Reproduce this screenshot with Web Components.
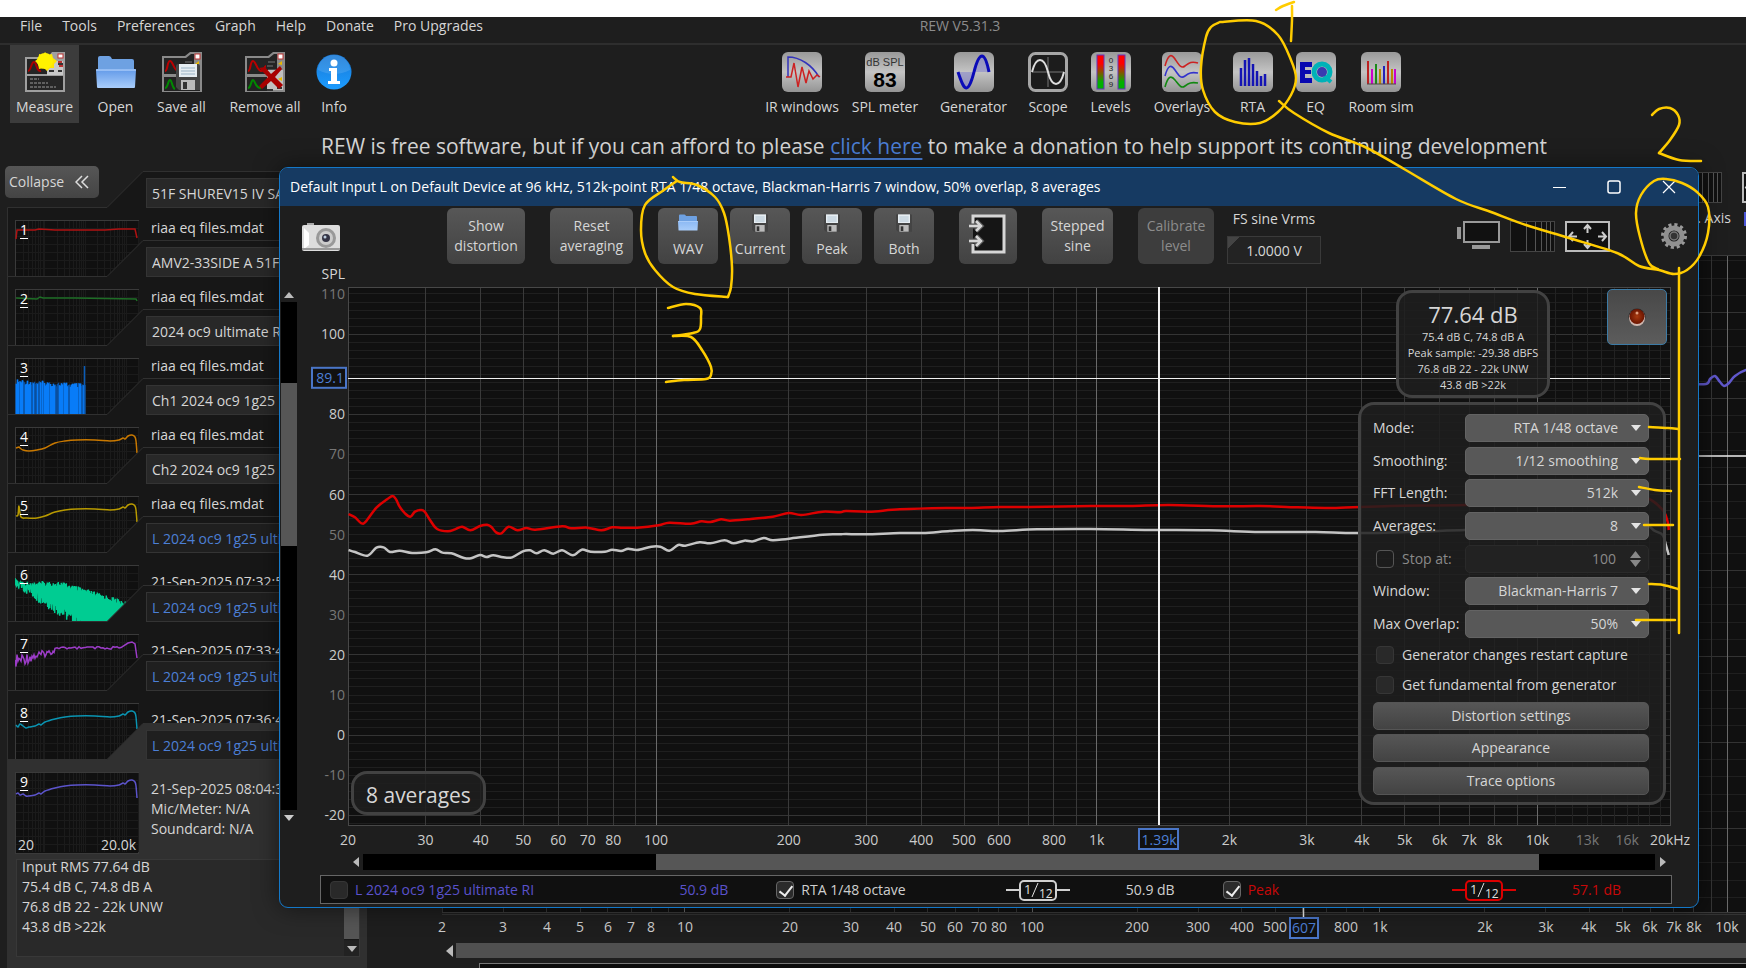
<!DOCTYPE html>
<html lang="en">
<head>
<meta charset="utf-8">
<title>REW V5.31.3</title>
<style>
  html, body { height: 100%; margin: 0; background: #fff; }
  body { overflow: hidden; font: 14px/20px "Open Sans", "Noto Sans", sans-serif; color: #d6d6d6; }
</style>
</head>
<body>
<rew-app></rew-app>

<script>
const CONTROL_CSS = `
  * { box-sizing: border-box; }
  button, input, select { font: inherit; color: inherit; margin: 0; }
  input[type=checkbox] {
    appearance: none;
    flex: none;
    width: 18px;
    height: 18px;
    border: 1px solid #363636;
    border-radius: 4px;
    background: #292929;
  }
`;

const tile = (id, inner) => `
  <svg width="40" height="40" viewBox="0 0 40 40">
    <defs><linearGradient id="t-${id}" x2="0" y2="1">
      <stop offset="0" stop-color="#999"/><stop offset=".5" stop-color="#c4c4c4"/><stop offset="1" stop-color="#949494"/>
    </linearGradient></defs>
    <rect width="40" height="40" rx="6" fill="url(#t-${id})"/>${inner}
  </svg>`;

const miniApp = `
  <path d="M0 4h23l5-4h12v40H0z" fill="#8a8a8a"/>
  <path d="M2 6h22l5-4h3v20H2z" fill="#242424"/>
  <path d="M3 19C6 19 5 9 8 9s4 10 8 10 3-5 5-5" fill="none" stroke="#b00" stroke-width="2"/>
  <rect x="33" y="2" width="5" height="5" fill="#fff" stroke="#b33" stroke-width="1"/>
  <path d="M33 12l4-3v4z" fill="#e8b800"/>
  <path d="M23 10h7M22 14h6M23 18h8" stroke="#777"/>`;

const folder = `
  <path d="M2 3q0-2 2-2h9q2 0 3 3h20q2 0 2 2v12H2z" fill="#6ea1e2"/>
  <path d="M0 15q0-1 1-1h38q1 0 1 1l-1 17q0 1-1 1H2q-1 0-1-1z" fill="url(#fo)"/>
  <path d="M0 15h40" stroke="#c7dfff"/>`;

const floppy = `
  <path d="M0 2q0-2 2-2h20q2 0 2 2v24H3l-3-3z" fill="#444"/>
  <rect x="3" y="0" width="18" height="13" fill="#e6edf2"/>
  <path d="M5 4h14M5 7h14M5 10h14" stroke="#9bb3c5"/>
  <rect x="5" y="16" width="14" height="10" fill="#bbb"/>
  <rect x="7" y="18" width="4" height="7" fill="#333"/>`;

const ICONS = {
  measure: `<svg width="40" height="40" viewBox="0 0 40 40">
    <path d="M0 5h23l4-5h13v40H0z" fill="#a0a0a0"/>
    <rect x="2" y="7" width="20" height="15" fill="#242424"/>
    <path d="M3 19c3 0 3-9 6-9s2 10 7 9" fill="none" stroke="#a00" stroke-width="2"/>
    <rect x="22" y="9" width="16" height="14" fill="#c9c9c9"/>
    <rect x="33" y="2" width="5" height="4" fill="#fff" stroke="#b33"/><path d="M33 10h4M34 14h4" stroke="#b33" stroke-width="2"/>
    <path d="M33 12h5M24 19h5M33 19h4" stroke="#333" stroke-width="2"/>
    <rect x="2" y="24" width="36" height="14" fill="#262626"/>
    <path d="M5 27h9M5 31h18M5 35h26" stroke="#999" stroke-dasharray="3 1"/>
    <path d="M20 0l3 3 4-1 1 4 4 3-3 3 0 4-4 0-3 3-3-3-5 1-1-5-3-3 4-3 0-4 4 1z" fill="#ffe600"/>
    <circle cx="20" cy="9" r="8" fill="#fff100"/></svg>`,
  open: `<svg width="40" height="34" viewBox="0 0 40 34"><defs><linearGradient id="fo" x2="0" y2="1">
    <stop offset="0" stop-color="#6199e8"/><stop offset="1" stop-color="#a9cdfa"/></linearGradient></defs>${folder}</svg>`,
  save: `<svg width="40" height="40" viewBox="0 0 40 40">${miniApp}
    <rect x="2" y="25" width="36" height="14" fill="#222"/><path d="M3 36c3 0 3-8 5-8s2 8 5 9" fill="none" stroke="#080" stroke-width="2"/>
    <g transform="translate(14 12)">${floppy}</g></svg>`,
  remove: `<svg width="40" height="40" viewBox="0 0 40 40">${miniApp}
    <rect x="2" y="25" width="20" height="14" fill="#222"/><path d="M3 36c3 0 3-8 5-8s2 8 8 8" fill="none" stroke="#080" stroke-width="2"/>
    <rect x="22" y="18" width="16" height="20" fill="#c0c0c0"/><path d="M33 27l4-2v4z" fill="#e8b800"/><path d="M22 38h6M32 36h5" stroke="#333" stroke-width="2"/>
    <path d="M14 16l6-1 6 7 9-8 2 3-7 8 8 8-4 4-8-8-9 8-3-3 9-9z" fill="#a80000"/></svg>`,
  info: `<svg width="36" height="36" viewBox="0 0 36 36"><defs><linearGradient id="in" x2="0" y2="1">
    <stop offset="0" stop-color="#1878d6"/><stop offset="1" stop-color="#1c9cff"/></linearGradient></defs>
    <circle cx="18" cy="18" r="17.5" fill="url(#in)"/><path d="M2 16a16 15 0 0 1 32 0q-16 8-32 0z" fill="#fff" opacity=".12"/>
    <circle cx="18" cy="9" r="3.5" fill="#fff"/><path d="M13 14h8v13h3v3H12v-3h3V17h-2z" fill="#fff"/></svg>`,
  ir: tile('ir', `<path d="M6 25V5c12 0 24 8 31 20" fill="none" stroke="#33b" stroke-width="1.5"/>
    <path d="M4 25h5l3-14 4 24 4-20 4 16 3-12 4 8 4-4 3 2" fill="none" stroke="#c22" stroke-width="1.5"/>`),
  spl: tile('spl', `<text x="20" y="14" text-anchor="middle" font-family="Liberation Sans" font-size="11" fill="#333">dB SPL</text>
    <text x="20" y="35" text-anchor="middle" font-family="Liberation Sans" font-weight="bold" font-size="21" fill="#000">83</text>`),
  generator: tile('ge', `<path d="M5 20h30C33 9 30 4 28 4S23 9 20 20 14 36 12 36 7 28 5 20z" fill="#88c" opacity=".6"/>
    <path d="M4 20C8 32 10 36 12.500 36S18 28 20 20 25 4 28 4s5 6 7 16" fill="none" stroke="#0b0bb8" stroke-width="3"/>`),
  scope: `<svg width="40" height="40" viewBox="0 0 40 40"><rect x="1.500" y="1.500" width="37" height="37" rx="6" fill="#1c1c1c" stroke="#a6a6a6" stroke-width="3"/>
    <path d="M20 5v30M4 20h32" stroke="#777"/><path d="M4 20C8 4 16 4 20 20s12 16 16 0" fill="none" stroke="#ddd" stroke-width="2"/></svg>`,
  levels: tile('le', `<defs><linearGradient id="lv" x2="0" y2="1"><stop offset=".25" stop-color="#f00"/><stop offset=".8" stop-color="#00b000"/></linearGradient></defs>
    <rect x="6" y="3" width="7" height="34" fill="url(#lv)" stroke="#63b"/><rect x="27" y="3" width="7" height="34" fill="url(#lv)" stroke="#63b"/>
    <g font-family="Liberation Sans" font-size="8" fill="#222" text-anchor="middle"><text x="20" y="11">0</text><text x="20" y="19">3</text><text x="20" y="27">6</text><text x="20" y="35">9</text></g>`),
  overlays: tile('ov', `<g fill="none" stroke-width="1.600"><path d="M3 14C6 3 9 1 13 7s6 10 10 7 6-5 13-3" stroke="#c22"/>
    <path d="M3 24c3-11 6-12 10-6s6 9 10 6 6-4 13-3" stroke="#33c"/><path d="M3 35c3-11 6-12 10-7s6 9 10 6 6-4 13-3" stroke="#181"/></g>`),
  rta: tile('rt', `<path d="M8 34V16M12 34V8M16 34V6M20 34V12M24 34V19M28 34V24M32 34V22" stroke="#1414b4" stroke-width="2.500"/>`),
  eq: tile('eq', `<circle cx="26" cy="20" r="8" fill="none" stroke="#00b2b8" stroke-width="5"/><path d="M28 24l7 6" stroke="#00b2b8" stroke-width="4"/><circle cx="26" cy="20" r="5" fill="#3a3ab0"/>
    <path d="M4 10h12v5h-7v3h6v4h-6v4h7v5H4z" fill="#0808b0"/>`),
  room: tile('ro', `<path d="M7 32V9" stroke="#b22" stroke-width="2"/><path d="M11 32V17" stroke="#c0c" stroke-width="2"/><path d="M15 32V12" stroke="#1a8a1a" stroke-width="2"/><path d="M19 32V17" stroke="#b80" stroke-width="2"/>
    <path d="M23 32V14" stroke="#22b" stroke-width="2"/><path d="M27 32V9" stroke="#b22" stroke-width="2"/><path d="M31 32V17" stroke="#b80" stroke-width="2"/><path d="M34 32V17" stroke="#c0c" stroke-width="2"/><path d="M6 32h29" stroke="#544"/>`),
  folder: `<svg width="20" height="17" viewBox="0 0 40 34"><defs><linearGradient id="fo" x2="0" y2="1">
    <stop offset="0" stop-color="#8bb8f3"/><stop offset="1" stop-color="#a9cdfa"/></linearGradient></defs>${folder}</svg>`,
  floppy: `<svg width="16" height="18" viewBox="0 0 24 26">${floppy}</svg>`,
  camera: `<svg width="38" height="29" viewBox="0 0 38 29"><rect x="5" y="1" width="7" height="4" fill="#aaa"/><rect y="3" width="38" height="26" rx="2" fill="#ddd"/>
    <path d="M2 6l5 5v12l-5 4z" fill="#fff"/><path d="M0 27h38" stroke="#999" stroke-width="2"/><circle cx="24" cy="16" r="10" fill="#999"/><circle cx="24" cy="16" r="7" fill="#ccc"/>
    <circle cx="24" cy="16" r="4" fill="#334"/><circle cx="23" cy="15" r="1.500" fill="#bcd"/></svg>`,
  input: `<svg width="38" height="40" viewBox="0 0 38 40"><path d="M4 14V2h31v36H4v-8" fill="#151515" stroke="#d6d6d6" stroke-width="3"/>
    <path d="M0 12h11M7 7l5 5-5 5M0 27h11M7 22l5 5-5 5" fill="none" stroke="#555" stroke-width="5"/>
    <path d="M0 12h11M7 7l5 5-5 5M0 27h11M7 22l5 5-5 5" fill="none" stroke="#d6d6d6" stroke-width="2.500"/></svg>`,
  monitor: `<svg width="43" height="30" viewBox="0 0 43 30"><rect y="6" width="4" height="12" fill="#999"/><rect x="7" y="1" width="35" height="20" fill="#111" stroke="#999" stroke-width="2"/>
    <rect x="15" y="24" width="18" height="4" fill="#999"/></svg>`,
  grid: `<svg width="45" height="31" viewBox="0 0 45 31"><rect x=".5" y=".5" width="44" height="30" fill="#111" stroke="#444"/>
    <path d="M16.500 1v29M25.500 1v29M31.500 1v29M36.500 1v29M40.500 1v29" stroke="#555"/></svg>`,
  arrows: `<svg width="45" height="31" viewBox="0 0 45 31"><rect x="1" y="1" width="43" height="29" fill="#111" stroke="#bbb" stroke-width="2"/>
    <path d="M22.500 12V4M19 8l3.500-4L26 8M22.500 19v8M19 23l3.500 4 3.500-4M12 15.500H4M8 11l-4 4.500L8 20M33 15.500h8M37 11l4 4.500-4 4.500" fill="none" stroke="#ccc" stroke-width="2"/></svg>`,
  gear: `<svg width="28" height="28" viewBox="-14 -14 28 28"><circle r="11" fill="none" stroke="#999" stroke-width="4" stroke-dasharray="3 2.760"/>
    <circle r="8" fill="none" stroke="#909090" stroke-width="5"/><circle r="4" fill="#333" stroke="#777" stroke-width="1.500"/></svg>`
};

// Catmull-Rom spline through a flat "x,y x,y" list
function smooth(list) {
  const p = list.trim().split(/\s+/).map(s => s.split(',').map(Number));
  let d = `M${p[0]}`;
  for (let i = 0; i < p.length - 1; i++) {
    const a = p[i - 1] || p[i], b = p[i], c = p[i + 1], e = p[i + 2] || c;
    d += `C${b[0] + (c[0] - a[0]) / 6},${b[1] + (c[1] - a[1]) / 6} ${c[0] - (e[0] - b[0]) / 6},${c[1] - (e[1] - b[1]) / 6} ${c}`;
  }
  return d;
}

// small repeatable noise, so the thumbnails look the same every time
function noise(i) {
  const v = Math.sin(i * 12.9898) * 43758.5453;
  return v - Math.floor(v);
}

class ToolButton extends HTMLElement {
  connectedCallback() {
    this.attachShadow({mode: 'open'}).innerHTML = `
      <style>
        ${CONTROL_CSS}
        :host { display: flex; flex: none; }
        button {
          width: 100%;
          display: flex;
          flex-direction: column;
          align-items: center;
          border: 0;
          padding: 0 0 6px;
          background: none;
          white-space: nowrap;
        }
        :host([active]) button { background: #3c3c3c; }
        .icon { height: 53px; display: flex; align-items: center; justify-content: center; padding-top: 1px; }
        svg { display: block; flex: none; }
      </style>
      <button type="button"><span class="icon">${ICONS[this.getAttribute('icon')]}</span><slot></slot></button>
    `;
  }
}

class MeasurementCard extends HTMLElement {
  trace() {
    const curve = '40,16 50,14 62,13 80,13 95,14 104,13 108,11 110,12 113,9 117,8 120,10 121,14 122,26';
    const line = (color, d) => `<path d="${d}" fill="none" stroke="${color}" stroke-width="1.5"/>`;
    let d = '';
    switch (this.getAttribute('trace')) {
      case '1': return line('#b01212', 'M1 19L2 10 20 10 24 9 40 10 90 10 104 9 120 9 122 18');
      case '2': return line('#1e6e26', 'M1 9L22 10 25 8 28 9 60 9 121 10 122 12');
      case '3':
        for (let x = 1; x < 70; x++) d += `M${x + .5} ${21 + x / 16 + noise(x) * 5}V81`;
        return line('#0a4f9e', d).replace('1.5', '1') +
          line('#087cf8', d.split('M').filter((s, i) => i && noise(i * 3) > .35).map(s => 'M' + s).join('')) +
          line('#0a5cb8', 'M69.500 8V81');
      case '4': return line('#c87800', smooth('1,21 4,20 5,21 8,23 14,24 22,23 30,21 ' + curve));
      case '5': return line('#b89a00', smooth('1,20 3,19 4,10 6,21 12,22 22,22 30,20 ' + curve));
      case '6':
        for (let x = 0; x < 111; x++) {
          const top = x < 45 ? 16 : 16 + (x - 45) * .3;
          const bottom = x < 8 ? 26 : 28 + (x - 8) * .66;
          d += `L${x + .3} ${top + noise(x) * 5}L${x + .7} ${bottom - noise(x + 40) * 11}`;
        }
        return line('#00cc92', 'M0 13' + d);
      case '7':
        for (let x = 1; x < 40; x++) d += `L${x} ${27 - x * .25 + (noise(x) - .5) * (14 - x * .25)}`;
        for (let x = 40; x < 108; x += 2) d += `L${x} ${14 + (noise(x) - .5) * 3}`;
        return line('#9c3cc8', 'M0 26' + d + 'L113 9 117 8 120 10 122 24');
      case '8': return line('#0a94b2', smooth('1,22 3,24 5,21 8,23 11,25 14,24 20,23 24,21 26,22 30,19 ' + curve));
      default: return line('#5c54cc', smooth('1,22 3,21 5,23 8,22 11,24 14,24 20,23 24,21 26,22 30,19 ' + curve));
    }
  }

  connectedCallback() {
    const selected = this.hasAttribute('selected');
    let grid = '';
    for (let dec = 10; dec < 20000; dec *= 10) {
      for (let n = 1; n < 10; n++) {
        const x = Math.round(Math.log10(dec * n / 20) / 3 * 122);
        if (x > 0 && x < 123) grid += `M${x + 1}.5 1V80`;
      }
    }
    for (let y = 8; y < 80; y += 8) grid += `M1 ${y}.5H123`;
    this.attachShadow({mode: 'open'}).innerHTML = `
      <style>
        ${CONTROL_CSS}
        :host { display: flex; position: relative; z-index: 0; height: 69px; flex: none; }
        :host([selected]) { height: 210px; }
        .card { flex: 1; min-width: 0; margin-top: -36px; }
        .shape { position: absolute; top: -36px; left: 0; width: 100%; height: calc(100% + 96px); z-index: -1; }
        .row { display: flex; gap: 7px; padding: 7px 8px 0; }
        .thumb { flex: none; margin-top: 42px; height: 82px; position: relative; width: 124px; }
        .thumb svg { display: block; }
        .num { position: absolute; left: 5px; top: 0; color: #fff; text-decoration: underline; text-underline-offset: 3px; }
        .range { position: absolute; left: 3px; right: 3px; bottom: 0; display: flex; justify-content: space-between; line-height: 18px; }
        .info { flex: 1; min-width: 0; }
        .name { width: 100%; height: 30px; border: 1px solid #343434; background: #282828; padding: 0 5px; color: #d6d6d6; }
        .name.blue { color: #4c7fd6; background: #1f1f1f; }
        p { margin: 10px 0 0 5px; white-space: pre-line; }
        :host([dated]) p { margin-top: 19px; }
      </style>
      <svg class="shape"><path d="M.5 36.500H100L136 .5H2000V2000H.5z" fill="${selected ? '#303030' : '#171717'}" stroke="#303030"/></svg>
      <div class="card">
        <div class="row">
          <div class="thumb">
            <svg width="124" height="82"><rect x=".5" y=".5" width="123" height="81" fill="#101010" stroke="#3a3a3a"/>
              <path d="${grid}" stroke="#1b1b1b"/>${this.trace()}</svg>
            <span class="num">${this.getAttribute('trace')}</span>
            ${selected ? '<span class="range"><span>20</span><span>20.0k</span></span>' : ''}
          </div>
          <div class="info">
            <input class="name ${this.hasAttribute('blue') ? 'blue' : ''}" aria-label="Measurement name" value="${this.getAttribute('name')}">
            <p><slot></slot></p>
          </div>
        </div>
        <slot name="notes"></slot>
      </div>
    `;
  }
}

class NotesBox extends HTMLElement {
  connectedCallback() {
    this.attachShadow({mode: 'open'}).innerHTML = `
      <style>
        :host { display: flex; margin: 5px 7px 0 9px; height: 98px; border: 1px solid #383838; background: #292929; box-sizing: border-box; }
        div { flex: 1; padding-left: 5px; white-space: pre-line; margin-top: -3px; }
        .bar { flex: none; width: 15px; padding: 0; margin: 0; background: linear-gradient(#555 82%, #111 82%, #222 84%); display: flex; align-items: flex-end; justify-content: center; }
        svg { margin-bottom: 3px; }
      </style>
      <div><slot></slot></div>
      <div class="bar"><svg width="10" height="7"><path d="M0 0h10L5 6z" fill="#bbb"/></svg></div>
    `;
  }
}

// Graph of the main window, seen around the RTA window
class MainGraph extends HTMLElement {
  connectedCallback() {
    const x = f => 75 + Math.log10(f / 2) * 347.5;
    let grid = '', bright = '', labels = '';
    for (let dec = 1; dec < 20000; dec *= 10) {
      for (let n = 1; n < 10; n++) {
        const f = dec * n;
        if (f < 2) continue;
        const seg = `M${Math.floor(x(f))}.5 0V657`;
        if (n === 1) bright += seg; else grid += seg;
        if (n === 9 || f === 600 || f === 700 || f > 10000) continue;
        labels += `<text x="${Math.round(x(f))}" y="677">${f < 1000 ? f : f / 1000 + 'k'}</text>`;
      }
    }
    let rows = '', major = '';
    for (let i = 0; i < 39; i++) {
      const seg = `M75 ${Math.round(57 + (i - 3) * 17.2)}.5H2000`;
      if (i % 5 === 3) major += seg; else rows += seg;
    }
    this.attachShadow({mode: 'open'}).innerHTML = `
      <style>
        ${CONTROL_CSS}
        :host { display: flex; flex-direction: column; flex: 1; min-width: 0; overflow: hidden; background: #1e1e1e; }
        .tools { display: flex; justify-content: flex-end; gap: 20px; height: 90px; margin-right: -41px; padding-top: 7px; flex: none; }
        .tools span { display: flex; flex-direction: column; align-items: center; width: 45px; white-space: nowrap; }
        .tools svg { flex: none; margin-bottom: 5px; }
        .tools .axis { align-items: flex-end; }
        .axis b { font-weight: normal; margin-right: -9px; }
        .mark { border-left: 3px solid #4b56d8; height: 14px; align-self: flex-start; margin: 4px 0 0 2px; }
        .plot { flex: 1; min-height: 0; width: 100%; font-size: 14px; fill: #ccc; text-anchor: middle; }
        .scroll { display: flex; align-items: center; gap: 3px; height: 15px; margin: 0 0 5px 79px; flex: none; }
        .scroll i { flex: 1; height: 15px; background: #505050; }
        .below { height: 5px; margin-left: 112px; border: 1px solid #777; border-width: 1px 0 0 1px; background: #0c0c0c; flex: none; }
      </style>
      <div class="tools"><span class="axis">${ICONS.grid}<b>. Axis</b></span><span>${ICONS.arrows}<i class="mark"></i></span></div>
      <svg class="plot">
        <rect x="75" y="0" width="100%" height="657" fill="#101010"/>
        <path d="${rows}" stroke="#1f1f1f"/><path d="${major}" stroke="#333"/><path d="${grid}" stroke="#363636"/><path d="${bright}" stroke="#6a6a6a"/>
        <path d="M75 .5H2000M75 657.500H2000" stroke="#3a3a3a"/>
        <path d="M75 201H2000M936.500 380V662" stroke="#eee" stroke-width="1.5"/>
        <path d="${smooth('1320,129 1339,129 1343,124 1348,121 1353,127 1357,131 1362,128 1368,121 1379,115 1400,110')}" fill="none" stroke="#6058cc" stroke-width="2.500"/>
        ${labels}
        <g><rect x="923" y="663" width="28" height="20" fill="#111" stroke="#4a76c8" stroke-width="2"/><text x="937" y="678" fill="#4c7fd6">607</text></g>
      </svg>
      <div class="scroll"><svg width="7" height="12"><path d="M7 0v12L0 6z" fill="#bbb"/></svg><i></i></div>
      <div class="below"></div>
    `;
  }
}

class RtaPlot extends HTMLElement {
  connectedCallback() {
    const x = f => (Math.log10(f / 20) / 3 * 100) + '%';
    const y = db => (1.3 + (110 - db) * .7454) + '%';
    let grid = '';
    for (let db = 110; db >= -22; db -= 2) {
      grid += `<line x1="0" x2="100%" y1="${y(db)}" y2="${y(db)}" stroke="${db % 20 ? '#1f1f1f' : '#343434'}"/>`;
    }
    for (let dec = 10; dec < 20000; dec *= 10) {
      for (let n = 1; n < 10; n++) {
        if (dec * n > 20 && dec * n < 10001) {
          grid += `<line x1="${x(dec * n)}" x2="${x(dec * n)}" y1="0" y2="100%" stroke="${n === 1 ? '#6a6a6a' : '#3a3a3a'}"/>`;
        }
      }
    }
    for (let f = 11000; f < 20000; f += 1000) grid += `<line x1="${x(f)}" x2="${x(f)}" y1="0" y2="100%" stroke="#222"/>`;

    let yLabels = '', xLabels = '';
    for (let db = 110; db >= -20; db -= 10) {
      if (db === 90) continue;
      yLabels += `<svg y="${y(db)}" overflow="visible"><text x="48" y="5" fill="${db % 20 ? '#777' : '#ccc'}">${db}</text></svg>`;
    }
    for (const f of [20, 30, 40, 50, 60, 70, 80, 100, 200, 300, 400, 500, 600, 800, 1000, 2000, 3000, 4000, 5000, 6000, 7000, 8000, 10000, 13000, 16000, 20000]) {
      const text = f < 1000 ? f : f / 1000 + (f === 20000 ? 'kHz' : 'k');
      xLabels += `<text x="${x(f)}" y="20" fill="${f === 13000 || f === 16000 ? '#777' : '#ccc'}">${text}</text>`;
    }

    this.attachShadow({mode: 'open'}).innerHTML = `
      <style>
        ${CONTROL_CSS}
        :host {
          display: grid;
          flex: 1;
          min-height: 0;
          grid-template: 23px minmax(0, 1fr) 29px 16px / 1px 16px 51px minmax(0, 1fr) 28px;
        }
        svg { display: block; overflow: visible; }
        .spl { grid-area: 1 / 3 / 2 / 4; text-align: right; padding-right: 3px; }
        .vbar { grid-area: 2 / 2 / 3 / 3; display: flex; flex-direction: column; align-items: center; }
        .hbar { grid-area: 4 / 4 / 5 / 5; display: flex; align-items: center; }
        .arrow { width: 15px; height: 15px; flex: none; display: grid; place-items: center; }
        .track { flex: 1; background: #000; display: flex; align-self: stretch; }
        .vbar .track { flex-direction: column; }
        .vbar .track::before { content: ''; height: 16%; }
        .vbar i { height: 32%; background: #565656; }
        .hbar .track::before { content: ''; width: 22.7%; }
        .hbar i { width: 68.3%; background: #565656; }
        .yaxis { grid-area: 2 / 3 / 3 / 4; width: 100%; height: 100%; text-anchor: end; }
        .xaxis { grid-area: 3 / 4 / 4 / 5; width: 100%; height: 100%; text-anchor: middle; }
        .plot { grid-area: 2 / 4 / 3 / 5; position: relative; background: #101010; }
        .plot > svg { position: absolute; width: 100%; height: 100%; inset: 0; }
        .plot .traces { overflow: hidden; }
        .traces path { fill: none; stroke-width: 2.500; vector-effect: non-scaling-stroke; }
        .box { position: absolute; border: 3px solid #424242; border-radius: 16px; background: rgba(31, 31, 31, .85); text-align: center; white-space: nowrap; }
        .averages { left: 3px; bottom: 10px; padding: 0 12px; height: 44px; font-size: 21px; line-height: 42px; }
        .level { right: 120px; top: 3px; width: 154px; height: 108px; padding-top: 6px; font-size: 11px; line-height: 16px; }
        .level strong { display: block; font-weight: normal; font-size: 22px; line-height: 30px; }
        .record { position: absolute; right: 3px; top: 2px; width: 60px; height: 56px; border: 1px solid #3c7ba6; border-radius: 5px; background: linear-gradient(#484848, #5c5c5c); display: grid; place-items: center; }
        rta-settings { position: absolute; right: 4px; top: 115px; bottom: 20px; width: 308px; }
      </style>
      <span class="spl">SPL</span>
      <div class="vbar">
        <span class="arrow"><svg width="10" height="6"><path d="M0 6h10L5 0z" fill="#bbb"/></svg></span>
        <span class="track"><i></i></span>
        <span class="arrow"><svg width="10" height="6"><path d="M0 0h10L5 6z" fill="#ccc"/></svg></span>
      </div>
      <svg class="yaxis">${yLabels}
        <svg y="${y(89.1)}" overflow="visible"><rect x="15" y="-10" width="34" height="20" fill="#111" stroke="#4a76c8" stroke-width="2"/><text x="47" y="5" fill="#4c7fd6">89.1</text></svg>
      </svg>
      <div class="plot">
        <svg shape-rendering="crispEdges">${grid}
          <rect x="0" y="0" width="100%" height="100%" fill="none" stroke="#484848"/>
        </svg>
        <svg class="traces" viewBox="0 0 1322 538" preserveAspectRatio="none">
          <g transform="translate(-68 193) scale(.3571 .3333)">
            <path stroke="#dc0000" d="${smooth(`192,102 210,112 228,130 240,125 270,83 300,58 315,48 325,58 335,80 350,100 365,110 378,95 395,90
              405,95 420,120 440,147 470,154 490,148 510,140 533,151 560,138 580,134 592,141 605,157 620,160 640,140 665,151 690,144 715,149
              790,139 815,145 860,143 900,151 930,142 960,143 1000,143 1060,136 1090,128 1150,131 1180,124 1205,126 1235,118 1260,122
              1310,118 1380,110 1425,99 1460,105 1520,95 1568,97 1585,93 1650,95 1736,88 1865,84 1930,84 2016,81 2100,81 2271,78 2380,78 2489,75
              2640,79 2744,78 2850,82 2957,84 3108,78 3318,75 3600,66 3780,51 3828,54 3872,90 3886,126 3889,150`)}"/>
            <path stroke="#c4c4c4" d="${smooth(`192,210 210,216 245,227 270,203 290,202 308,216 335,212 370,219 410,217 435,208 455,218 480,220
              515,234 535,235 560,225 578,231 597,226 625,232 650,232 680,214 700,211 718,220 740,211 765,221 790,211 820,226 845,209 870,215
              910,215 930,209 955,213 975,206 1000,210 1040,200 1065,200 1090,212 1115,195 1135,197 1175,187 1205,190 1245,181 1270,190
              1300,182 1325,184 1355,174 1380,181 1425,176 1520,164 1568,163 1585,162 1640,163 1736,159 1800,159 1876,153 1940,150 2016,153 2120,148 2271,147
              2436,150 2600,151 2744,156 2900,156 3038,159 3318,150 3640,138 3808,132 3850,153 3872,165 3881,195 3889,225`)}"/>
          </g>
        </svg>
        <svg shape-rendering="crispEdges" stroke="#f0f0f0" stroke-width="2"><line x1="0" x2="100%" y1="${y(89)}" y2="${y(89)}" stroke-width="1"/>
          <line x1="${x(1385)}" x2="${x(1385)}" y1="0" y2="100%"/></svg>
        <div class="box averages">8 averages</div>
        <div class="box level"><strong>77.64 dB</strong>75.4 dB C, 74.8 dB A<br>Peak sample: -29.38 dBFS<br>76.8 dB 22 - 22k UNW<br>43.8 dB &gt;22k</div>
        <button class="record" type="button" aria-label="Record"><svg width="18" height="20"><defs><radialGradient id="re"><stop stop-color="#a83a10"/><stop offset="1" stop-color="#6a1400"/></radialGradient></defs>
          <circle cx="9" cy="10" r="8.500" fill="#2a2a2a"/><circle cx="9" cy="11" r="8" fill="#d0b8b0"/><circle cx="9" cy="9.500" r="7.500" fill="url(#re)"/><circle cx="9" cy="6" r="1.500" fill="#e0a080"/></svg></button>
        <rta-settings></rta-settings>
      </div>
      <svg class="xaxis">${xLabels}
        <svg x="${x(1385)}" overflow="visible"><rect x="-20" y="4" width="39" height="20" fill="#111" stroke="#4a76c8" stroke-width="2"/><text x="0" y="20" fill="#4c7fd6">1.39k</text></svg>
      </svg>
      <div class="hbar">
        <span class="arrow"><svg width="6" height="10"><path d="M6 0v10L0 5z" fill="#bbb"/></svg></span>
        <span class="track"><i></i></span>
        <span class="arrow"><svg width="6" height="10"><path d="M0 0v10L6 5z" fill="#bbb"/></svg></span>
      </div>
    `;
  }
}

class RtaSettings extends HTMLElement {
  connectedCallback() {
    const row = (id, label, value) => `
      <div class="row"><label for="${id}">${label}:</label>
        <span class="select"><select id="${id}"><option>${value}</option></select></span></div>`;
    this.attachShadow({mode: 'open'}).innerHTML = `
      <style>
        ${CONTROL_CSS}
        :host {
          display: flex;
          flex-direction: column;
          justify-content: space-between;
          box-sizing: border-box;
          padding: 9px 14px 7px 12px;
          border: 3px solid #424242;
          border-radius: 16px;
          background: rgba(31, 31, 31, .85);
        }
        .row { display: grid; grid-template-columns: 92px minmax(0, 1fr); height: 28px; align-items: center; white-space: nowrap; }
        .select { position: relative; display: block; height: 28px; }
        .select::after { content: ''; position: absolute; right: 8px; top: 11px; border: 5px solid transparent; border-top: 6px solid #e4e4e4; border-bottom: 0; pointer-events: none; }
        select { appearance: none; width: 100%; height: 28px; border: 1px solid #636363; border-radius: 5px; background: #585858; text-align: right; text-align-last: right; padding: 0 30px 0 4px; }
        .check { display: flex; align-items: center; gap: 8px; height: 25px; padding-left: 3px; }
        .row .check { color: #8a8a8a; }
        .row .check input { border-color: #555; background: none; }
        .number { display: flex; align-items: center; height: 28px; border: 1px solid #2a2a2a; border-radius: 5px; background: #222; color: #8a8a8a; padding-right: 7px; gap: 14px; }
        .number input { flex: 1; min-width: 0; border: 0; background: none; text-align: right; padding: 0; }
        .number svg { flex: none; }
        button { height: 28px; border: 1px solid #555; border-radius: 5px; background: linear-gradient(#565656, #434343); padding: 0; }
      </style>
      ${row('mode', 'Mode', 'RTA 1/48 octave')}
      ${row('smoothing', 'Smoothing', '1/12 smoothing')}
      ${row('fft', 'FFT Length', '512k')}
      ${row('averages', 'Averages', '8')}
      <div class="row"><label class="check"><input type="checkbox">Stop at:</label>
        <span class="number"><input type="text" inputmode="numeric" value="100" aria-label="Stop at" disabled><svg width="11" height="16"><path d="M0 7h11L5.500 0zM0 9h11l-5.500 7z" fill="#888"/></svg></span></div>
      ${row('window', 'Window', 'Blackman-Harris 7')}
      ${row('overlap', 'Max Overlap', '50%')}
      <label class="check"><input type="checkbox">Generator changes restart capture</label>
      <label class="check"><input type="checkbox">Get fundamental from generator</label>
      <button type="button">Distortion settings</button>
      <button type="button">Appearance</button>
      <button type="button">Trace options</button>
    `;
  }
}

class RtaLegend extends HTMLElement {
  connectedCallback() {
    const badge = color => `<svg width="64" height="22"><path d="M0 11h14M50 11h14" stroke="${color}" stroke-width="2"/>
      <rect x="14" y="2" width="36" height="19" rx="4" fill="#111" stroke="${color}" stroke-width="2"/>
      <g fill="#e0e0e0"><text x="18" y="15" font-size="13">1</text><text x="33" y="19" font-size="12">12</text></g><path d="M26 18l6-14" stroke="#e0e0e0"/></svg>`;
    const trace = (color, label, value, on, icon) => `
      <div style="color:${color}"><label><input type="checkbox" ${on ? 'checked' : ''}>${label}</label>${icon}<span class="value">${value}</span></div>`;
    this.attachShadow({mode: 'open'}).innerHTML = `
      <style>
        ${CONTROL_CSS}
        :host { display: grid; grid-template-columns: repeat(3, 1fr); margin: 5px 26px 3px 40px; padding: 0 2px 0 9px; height: 29px; border: 1px solid #666; background: #101010; box-sizing: border-box; }
        div { display: grid; grid-template-columns: minmax(0, 1fr) 64px 105px 48px; align-items: center; }
        label { display: flex; align-items: center; gap: 7px; white-space: nowrap; }
        .value { grid-column: 3; text-align: right; }
        input:checked { border-color: #666; background: #2b2b2b; position: relative; }
        input:checked::after { content: ''; position: absolute; left: 5px; top: 1px; width: 6px; height: 11px; border: solid #eee; border-width: 0 2px 2px 0; transform: rotate(38deg); }
      </style>
      ${trace('#5a52cc', 'L 2024 oc9 1g25 ultimate RI', '50.9 dB', false, '')}
      ${trace('#cfcfcf', 'RTA 1/48 octave', '50.9 dB', true, badge('#d0d0d0'))}
      ${trace('#c80808', 'Peak', '57.1 dB', true, badge('#dc0000'))}
    `;
  }
}

class RtaWindow extends HTMLElement {
  connectedCallback() {
    this.attachShadow({mode: 'open'}).innerHTML = `
      <style>
        ${CONTROL_CSS}
        :host { display: flex; flex-direction: column; box-sizing: border-box; border: 1px solid #1478c8; border-radius: 9px; background: #1e1e1e; overflow: hidden; box-shadow: 0 0 24px rgba(0, 0, 0, .5); }
        header { display: flex; align-items: center; height: 38px; flex: none; padding: 0 19px 0 10px; background: #163a62; color: #fff; }
        h2 { font: inherit; margin: 0; flex: 1; white-space: nowrap; }
        header button { border: 0; background: none; padding: 0; width: 20px; height: 20px; margin-left: 35px; display: grid; place-items: center; }
        .bar { display: flex; gap: 25px; padding: 2px 10px 0 22px; height: 58px; flex: none; }
        .bar button { height: 56px; border: 0; border-radius: 6px; background: linear-gradient(#575757, #424242); padding: 0; white-space: pre-line; flex: none; }
        .bar button.plain { background: none; display: grid; place-items: center; }
        .bar button:disabled { background: #3d3d3d; color: #8c8c8c; }
        .files { display: flex; gap: 12px; }
        .files button { width: 60px; display: flex; flex-direction: column; align-items: center; justify-content: space-between; padding: 6px 0 5px; white-space: nowrap; }
        .volts { display: flex; flex-direction: column; justify-content: space-between; width: 94px; margin-left: -12px; padding-top: 1px; text-align: center; white-space: nowrap; }
        .volts input { width: 94px; height: 28px; text-align: center; border: 1px solid #3a3a3a; background: linear-gradient(135deg, #444 8px, #232323 8px); }
        .view { display: flex; gap: 10px; margin-left: auto; }
      </style>
      <header>
        <h2>Default Input L on Default Device at 96 kHz, 512k-point RTA 1/48 octave, Blackman-Harris 7 window, 50% overlap, 8 averages</h2>
        <button type="button" aria-label="Minimise"><svg width="13" height="13"><path d="M0 6.500h13" stroke="#fff"/></svg></button>
        <button type="button" aria-label="Maximise"><svg width="14" height="14"><rect x="1" y="1" width="12" height="12" rx="2" fill="none" stroke="#fff" stroke-width="1.500"/></svg></button>
        <button type="button" aria-label="Close"><svg width="14" height="14"><path d="M1 1l12 12M13 1L1 13" stroke="#fff" stroke-width="1.200"/></svg></button>
      </header>
      <div class="bar">
        <button class="plain" style="width:38px;margin-right:82px" aria-label="Capture image">${ICONS.camera}</button>
        <button type="button" style="width:78px">Show
distortion</button>
        <button type="button" style="width:83px">Reset
averaging</button>
        <div class="files">
          <button type="button">${ICONS.folder}WAV</button>
          <button type="button">${ICONS.floppy}Current</button>
          <button type="button">${ICONS.floppy}Peak</button>
          <button type="button">${ICONS.floppy}Both</button>
        </div>
        <button type="button" style="width:58px" aria-label="Input selection">${ICONS.input}</button>
        <button type="button" style="width:71px">Stepped
sine</button>
        <button type="button" style="width:76px" disabled>Calibrate
level</button>
        <div class="volts"><label for="volts">FS sine Vrms</label><input id="volts" value="1.0000 V"></div>
        <div class="view">
          <button class="plain" aria-label="Display">${ICONS.monitor}</button>
          <button class="plain" aria-label="Frequency axis">${ICONS.grid}</button>
          <button class="plain" aria-label="Fit to view">${ICONS.arrows}</button>
          <button class="plain" style="margin-left:40px" aria-label="Settings">${ICONS.gear}</button>
        </div>
      </div>
      <rta-plot></rta-plot>
      <rta-legend></rta-legend>
    `;
  }
}

// Hand drawn marks laid over the whole screen
class InkNotes extends HTMLElement {
  connectedCallback() {
    const strokes = [
      '1276,10 1283,6 1294,2', '1292,6 1292,20 1291,41',
      '1220,22 1256,21 1278,35 1291,60 1296,78 1291,95 1278,112 1260,123 1235,122 1215,112 1203,90 1201,67 1206,37 1211,27 1220,22',
      '1279,101 1294,113 1329,133 1365,147 1404,169 1456,199 1491,212 1526,225 1569,238 1617,253 1639,266 1659,270 1674,274 1687,270 1699,257 1708,233 1708,207 1697,192 1682,183 1666,179 1654,181 1641,195 1636,213 1640,237 1649,263 1658,269',
      '1679,268 1679,633',
      '1649,427 1668,428 1678,429', '1640,458 1650,459 1680,459', '1639,487 1655,490 1671,491',
      '1644,525 1673,525', '1649,584 1663,585 1678,589', '1636,620 1675,620',
      '1652,115 1659,109 1670,108 1678,115 1679,125 1670,140 1659,153', '1659,153 1679,160 1701,161',
      '673,177 680,182 697,185 715,197 724,213 729,237 732,267 731,287 728,297', '728,297 695,294 673,287 655,270 645,253 641,230 645,205 664,190 677,181',
      '668,308 686,304 700,308 701,317 700,329 693,333 673,336', '673,336 691,337 702,350 711,367 711,375 706,379 684,380 666,382'
    ];
    this.attachShadow({mode: 'open'}).innerHTML = `
      <style>
        :host { display: block; pointer-events: none; }
        svg { display: block; width: 100%; height: 100%; fill: none; stroke: #ffcc00; stroke-width: 2.500; stroke-linecap: round; stroke-linejoin: round; }
      </style>
      <svg>${strokes.map(s => `<path d="${smooth(s)}"/>`).join('')}</svg>
    `;
  }
}

class RewApp extends HTMLElement {
  connectedCallback() {
    this.attachShadow({mode: 'open'}).innerHTML = `
      <style>
        ${CONTROL_CSS}
        :host { display: flex; flex-direction: column; height: 100vh; box-sizing: border-box; padding-top: 17px; position: relative; overflow: hidden; }
        .menu { display: grid; grid-template-columns: 1fr auto 1fr; height: 28px; flex: none; margin-right: -174px; background: #1e1e1e; border-bottom: 2px solid #2e2e2e; line-height: 18px; }
        nav { display: flex; gap: 20px; padding-left: 20px; }
        nav button { border: 0; background: none; padding: 0 0 8px; white-space: nowrap; }
        h1 { font: inherit; margin: 0; color: #8c8c8c; }
        .tools { display: flex; height: 78px; flex: none; padding-left: 10px; background: #1e1e1e; }
        .banner { height: 42px; flex: none; margin: 0; padding-left: 321px; font-size: 21px; line-height: 46px; white-space: nowrap; background: #1e1e1e; }
        a { color: #4c7fd6; text-underline-offset: 4px; text-decoration-thickness: 2px; }
        main { display: flex; flex: 1; min-height: 0; background: #1e1e1e; }
        aside { width: 367px; flex: none; padding: 1px 0 0 7px; overflow: hidden; display: flex; flex-direction: column; }
        .collapse { width: 94px; height: 32px; margin: 0 0 9px -2px; flex: none; display: flex; align-items: center; justify-content: space-between; padding: 0 10px 0 4px; border: 0; border-radius: 5px; background: linear-gradient(#565656, #444); }
        rta-window { position: absolute; left: 279px; right: 47px; top: 167px; bottom: 60px; }
        ink-notes { position: absolute; inset: 0; }
      </style>
      <div class="menu">
        <nav>
          <button>File</button><button>Tools</button><button>Preferences</button><button>Graph</button><button>Help</button><button>Donate</button><button>Pro Upgrades</button>
        </nav>
        <h1>REW V5.31.3</h1>
      </div>
      <div class="tools">
        <tool-button icon="measure" active style="width:69px">Measure</tool-button>
        <tool-button icon="open" style="width:73px">Open</tool-button>
        <tool-button icon="save" style="width:59px">Save all</tool-button>
        <tool-button icon="remove" style="width:108px">Remove all</tool-button>
        <tool-button icon="info" style="width:30px">Info</tool-button>
        <tool-button icon="ir" style="width:88px;margin-left:409px">IR windows</tool-button>
        <tool-button icon="spl" style="width:78px">SPL meter</tool-button>
        <tool-button icon="generator" style="width:99px">Generator</tool-button>
        <tool-button icon="scope" style="width:50px">Scope</tool-button>
        <tool-button icon="levels" style="width:75px">Levels</tool-button>
        <tool-button icon="overlays" style="width:68px">Overlays</tool-button>
        <tool-button icon="rta" style="width:73px">RTA</tool-button>
        <tool-button icon="eq" style="width:53px">EQ</tool-button>
        <tool-button icon="room" style="width:78px">Room sim</tool-button>
      </div>
      <p class="banner">REW is free software, but if you can afford to please <a href="#donate">click here</a> to make a donation to help support its continuing development</p>
      <main>
        <aside>
          <button class="collapse">Collapse <svg width="14" height="14"><path d="M7 1L1 7l6 6M13 1L7 7l6 6" fill="none" stroke="#ddd" stroke-width="1.500"/></svg></button>
          <measurement-card trace="1" name="51F SHUREV15 IV SA">riaa eq files.mdat</measurement-card>
          <measurement-card trace="2" name="AMV2-33SIDE A 51F">riaa eq files.mdat</measurement-card>
          <measurement-card trace="3" name="2024 oc9 ultimate RI">riaa eq files.mdat</measurement-card>
          <measurement-card trace="4" name="Ch1 2024 oc9 1g25">riaa eq files.mdat</measurement-card>
          <measurement-card trace="5" name="Ch2 2024 oc9 1g25">riaa eq files.mdat</measurement-card>
          <measurement-card trace="6" blue dated name="L 2024 oc9 1g25 ultimate RI">21-Sep-2025 07:32:5</measurement-card>
          <measurement-card trace="7" blue dated name="L 2024 oc9 1g25 ultimate RI">21-Sep-2025 07:33:4</measurement-card>
          <measurement-card trace="8" blue dated name="L 2024 oc9 1g25 ultimate RI">21-Sep-2025 07:36:4</measurement-card>
          <measurement-card trace="9" blue dated selected name="L 2024 oc9 1g25 ultimate RI">21-Sep-2025 08:04:3<br>Mic/Meter: N/A<br>Soundcard: N/A<notes-box slot="notes">Input RMS 77.64 dB<br>75.4 dB C, 74.8 dB A<br>76.8 dB 22 - 22k UNW<br>43.8 dB &gt;22k</notes-box></measurement-card>
        </aside>
        <main-graph></main-graph>
      </main>
      <rta-window></rta-window>
      <ink-notes></ink-notes>
    `;
  }
}

customElements.define('tool-button', ToolButton);
customElements.define('measurement-card', MeasurementCard);
customElements.define('notes-box', NotesBox);
customElements.define('main-graph', MainGraph);
customElements.define('rta-plot', RtaPlot);
customElements.define('rta-settings', RtaSettings);
customElements.define('rta-legend', RtaLegend);
customElements.define('rta-window', RtaWindow);
customElements.define('ink-notes', InkNotes);
customElements.define('rew-app', RewApp);
</script>
</body>
</html>
